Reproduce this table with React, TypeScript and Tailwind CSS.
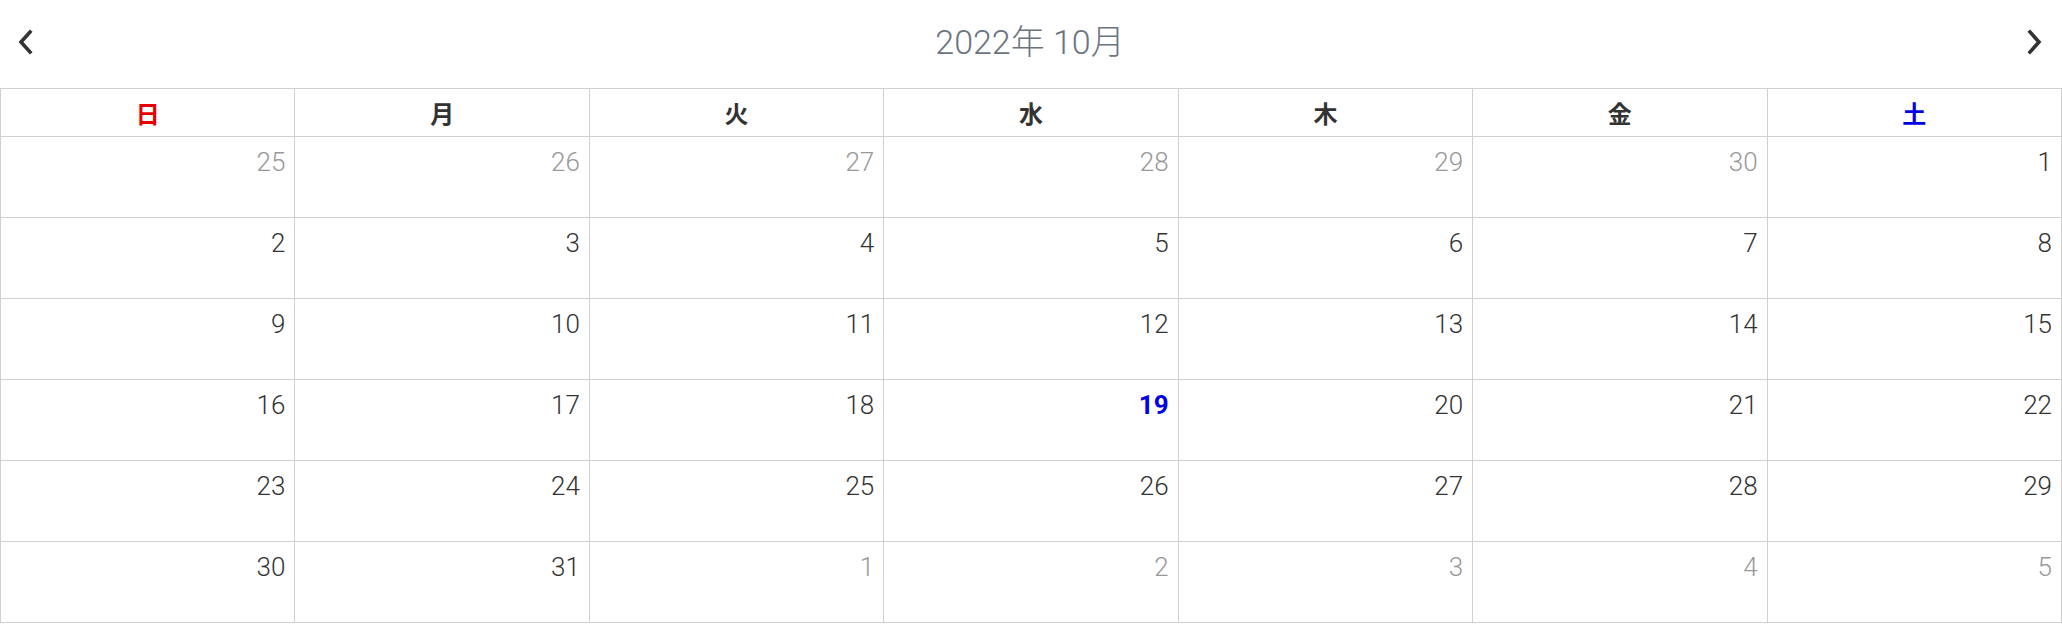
import React from 'react';

const WEEKDAYS = ['日', '月', '火', '水', '木', '金', '土'];

type Day = { n: number; other: boolean };

function buildDays(): Day[] {
  const days: Day[] = [];
  for (let d = 25; d <= 30; d++) days.push({ n: d, other: true });
  for (let d = 1; d <= 31; d++) days.push({ n: d, other: false });
  for (let d = 1; d <= 5; d++) days.push({ n: d, other: true });
  return days;
}

const TODAY = 19;

function Chevron({ dir }: { dir: 'left' | 'right' }) {
  return (
    <svg width="18" height="28" viewBox="0 0 18 28" fill="none" stroke="#333" strokeWidth="3.6" strokeLinecap="square">
      {dir === 'left' ? <polyline points="14,4 5,14 14,24" /> : <polyline points="4,4 13,14 4,24" />}
    </svg>
  );
}

export default function App() {
  const days = buildDays();

  return (
    <div className="w-[2062px] h-[624px] bg-white overflow-hidden" style={{ fontFamily: 'Roboto, "Liberation Sans", "Noto Sans CJK JP", sans-serif' }}>
      <div className="h-[88px] flex items-center justify-between pl-[15px] pr-[17px] pb-[4px]">
        <button className="w-[20px] flex items-center justify-center">
          <Chevron dir="left" />
        </button>
        <div className="text-[34px] font-light text-[#6b7480]">2022年 10月</div>
        <button className="w-[20px] flex items-center justify-center">
          <Chevron dir="right" />
        </button>
      </div>

      <div className="grid grid-cols-7 border-t border-l border-[#d0d0d0]">
        {WEEKDAYS.map((w, i) => (
          <div
            key={w}
            className={`h-[48px] flex items-center justify-center border-r border-b border-[#d0d0d0] text-[24px] font-bold ${
              i === 0 ? 'text-[#e60000]' : i === 6 ? 'text-[#0000e6]' : 'text-[#333]'
            }`}
            style={{ fontFamily: '"Noto Sans CJK JP", sans-serif' }}
          >
            {w}
          </div>
        ))}
        {days.map((d, i) => {
          const isToday = !d.other && d.n === TODAY;
          return (
            <div
              key={i}
              className={`h-[81px] border-r border-b border-[#d0d0d0] text-right pr-[9px] pt-[7px] text-[26px] leading-[36px] ${
                isToday ? 'font-bold text-[#0000e6]' : d.other ? 'font-light text-[#999]' : 'font-light text-[#333]'
              }`}
            >
              {d.n}
            </div>
          );
        })}
      </div>
    </div>
  );
}
